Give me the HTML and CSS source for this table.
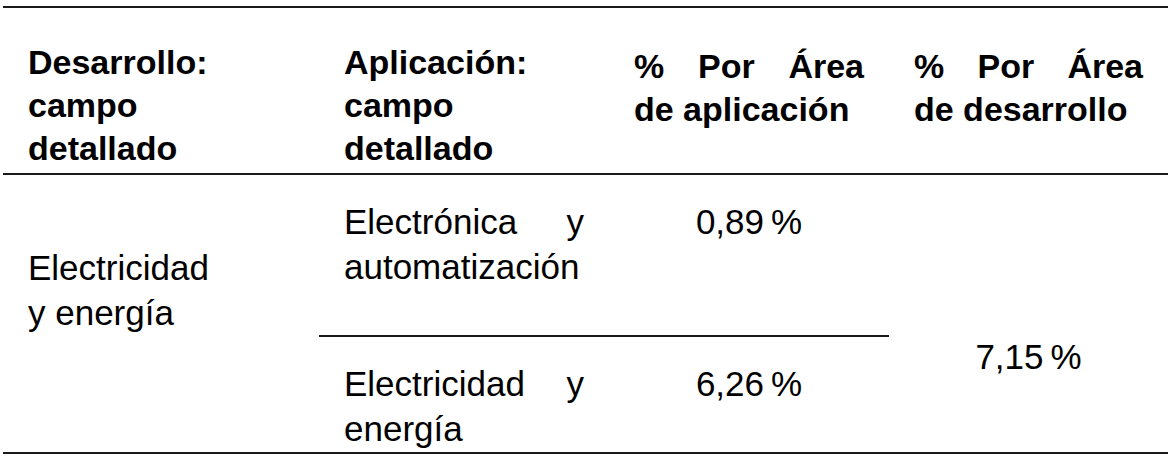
FILE: index.html
```html
<!DOCTYPE html>
<html lang="es">
<head>
<meta charset="utf-8">
<title>Tabla</title>
<link rel="stylesheet" href="styles.css">
</head>
<body>
<table class="tbl">
  <colgroup>
    <col class="c1"><col class="c2"><col class="c3"><col class="c4">
  </colgroup>
  <thead>
    <tr>
      <th class="hd"><span class="ln">Desarrollo:</span><span class="ln">campo</span><span class="ln">detallado</span></th>
      <th class="hd"><span class="ln">Aplicación:</span><span class="ln">campo</span><span class="ln">detallado</span></th>
      <th class="hd pct"><span class="ln jl">% Por Área</span><span class="ln">de aplicación</span></th>
      <th class="hd pct"><span class="ln jl">% Por Área</span><span class="ln">de desarrollo</span></th>
    </tr>
  </thead>
  <tbody>
    <tr>
      <td class="dev" rowspan="2"><span class="ln">Electricidad</span><span class="ln">y energía</span></td>
      <td class="cell first"><span class="ln jl">Electrónica y</span><span class="ln">automatización</span></td>
      <td class="cell first num">0,89&thinsp;%</td>
      <td class="tot" rowspan="2">7,15&thinsp;%</td>
    </tr>
    <tr>
      <td class="cell second split"><span class="ln jl">Electricidad y</span><span class="ln">energía</span></td>
      <td class="cell second split num">6,26&thinsp;%</td>
    </tr>
  </tbody>
</table>
</body>
</html>
```

FILE: styles.css
```css
html, body {
  margin: 0;
  padding: 0;
  background: #ffffff;
}

body {
  font-family: "Liberation Sans", Arial, sans-serif;
  color: #000000;
}

.tbl {
  margin: 6px 0 0 3px;
  width: 1165px;
  table-layout: fixed;
  border-collapse: separate;
  border-spacing: 0;
  border-top: 2px solid #1a1a1a;
  border-bottom: 2px solid #1a1a1a;
}

.c1 { width: 316px; }
.c2 { width: 290px; }
.c3 { width: 280px; }
.c4 { width: 279px; }

.ln {
  display: block;
  white-space: nowrap;
}

.jl {
  text-align: justify;
  text-align-last: justify;
}

.hd {
  font-weight: bold;
  font-size: 34px;
  line-height: 43px;
  text-align: left;
  vertical-align: top;
  padding: 33px 25px 3px 25px;
  border-bottom: 2px solid #1a1a1a;
}

.hd.pct {
  padding-top: 37px;
}

.dev,
.cell,
.tot {
  font-size: 35px;
  line-height: 45px;
  vertical-align: top;
  text-align: left;
  padding-left: 25px;
  padding-right: 25px;
}

.dev {
  padding-top: 70px;
}

.tot {
  padding-top: 159px;
  text-align: center;
}

.num {
  text-align: center;
}

.first {
  padding-top: 24px;
  padding-bottom: 46px;
}

.second {
  padding-top: 24px;
  padding-bottom: 1px;
}

.split {
  border-top: 2px solid #1a1a1a;
}
```
